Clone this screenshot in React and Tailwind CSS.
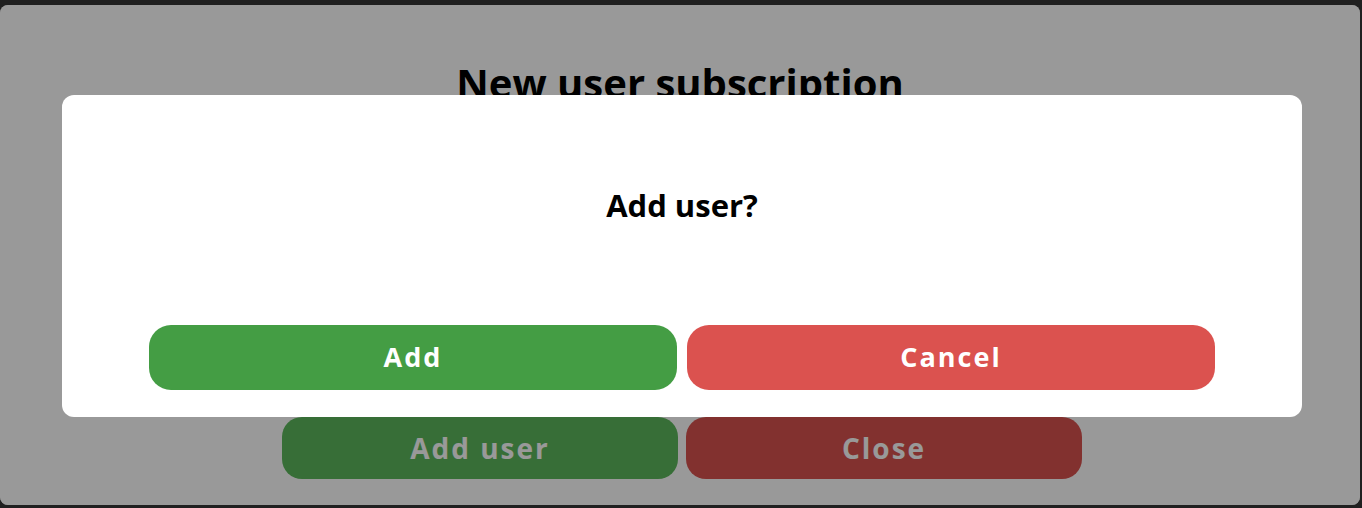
import React from 'react';

function App() {
  return (
    <div className="w-[1362px] h-[508px] bg-[#202020] overflow-hidden font-['Open_Sans',sans-serif]">
      <div className="relative mt-[5px] w-[1360px] h-[500px] rounded-lg bg-white overflow-hidden">
        {/* Underlying page */}
        <div className="flex flex-col items-center h-full">
          <h1 className="mt-[51px] text-[40px] leading-[54px] font-bold text-black">New user subscription</h1>
          <div className="flex-1" />
          <div className="flex gap-2 mb-[26px] ml-[4px]">
            <button className="w-[396px] h-[62px] rounded-[20px] bg-[#5cb85c] text-white text-[28px] font-bold tracking-[2px]">Add user</button>
            <button className="w-[396px] h-[62px] rounded-[20px] bg-[#d9534f] text-white text-[28px] font-bold tracking-[2px]">Close</button>
          </div>
        </div>

        {/* Overlay */}
        <div className="absolute inset-0 bg-black/40" />

        {/* Confirm modal */}
        <div className="absolute left-[62px] top-[90px] w-[1240px] h-[322px] rounded-xl bg-white flex flex-col items-center">
          <p className="mt-[89px] text-[31px] leading-[42px] font-bold text-black">Add user?</p>
          <div className="flex-1" />
          <div className="flex gap-[10px] mb-[27px]">
            <button className="w-[528px] h-[65px] rounded-[22px] bg-[#449d44] text-white text-[27px] font-bold tracking-[2px]">Add</button>
            <button className="w-[528px] h-[65px] rounded-[22px] bg-[#db524f] text-white text-[27px] font-bold tracking-[2px]">Cancel</button>
          </div>
        </div>
      </div>
    </div>
  );
}

export default App;
